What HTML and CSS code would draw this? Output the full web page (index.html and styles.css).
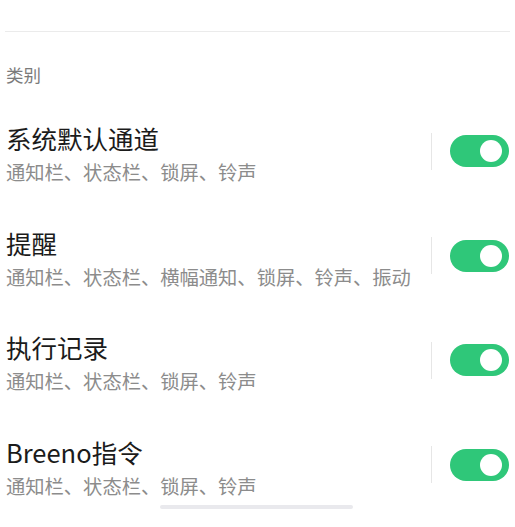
FILE: index.html
```html
<!DOCTYPE html>
<html lang="zh-CN">
<head>
  <meta charset="UTF-8">
  <meta name="viewport" content="width=device-width, initial-scale=1.0">
  <title>通知类别</title>
  <link rel="stylesheet" href="styles.css">
</head>
<body>
  <div class="top-bar"></div>

  <div class="section-label">类别</div>

  <ul class="channel-list">
    <li class="channel">
      <div class="channel-text">
        <div class="channel-title">系统默认通道</div>
        <div class="channel-desc">通知栏、状态栏、锁屏、铃声</div>
      </div>
      <span class="split"></span>
      <span class="switch on"><span class="knob"></span></span>
    </li>
    <li class="channel">
      <div class="channel-text">
        <div class="channel-title">提醒</div>
        <div class="channel-desc">通知栏、状态栏、横幅通知、锁屏、铃声、振动</div>
      </div>
      <span class="split"></span>
      <span class="switch on"><span class="knob"></span></span>
    </li>
    <li class="channel">
      <div class="channel-text">
        <div class="channel-title">执行记录</div>
        <div class="channel-desc">通知栏、状态栏、锁屏、铃声</div>
      </div>
      <span class="split"></span>
      <span class="switch on"><span class="knob"></span></span>
    </li>
    <li class="channel">
      <div class="channel-text">
        <div class="channel-title">Breeno指令</div>
        <div class="channel-desc">通知栏、状态栏、锁屏、铃声</div>
      </div>
      <span class="split"></span>
      <span class="switch on"><span class="knob"></span></span>
    </li>
  </ul>

  <!-- scroll indicator at the bottom -->
  <div class="scroll-bar"></div>
</body>
</html>
```

FILE: styles.css
```css
body {
  margin: 0;
  width: 515px;
  height: 527px;
  overflow: hidden;
  position: relative;
  background-color: #fff;
  font-family: "Noto Sans CJK SC", "Noto Sans", sans-serif;
}

.top-bar {
  height: 31px;
  margin: 0 5px;
  border-bottom: 1px solid #ebebeb;
}

.section-label {
  padding: 31px 0 0 6px;
  margin-bottom: 15px;
  font-size: 17.5px;
  line-height: 24px;
  color: #7b7b7b;
}

.channel-list {
  list-style: none;
  margin: 0;
  padding: 0;
}

.channel {
  display: flex;
  align-items: center;
  padding: 21px 6px 21.5px 6px;
}

.channel-text {
  flex: 1;
}

.channel-title {
  font-size: 25.5px;
  line-height: 30px;
  color: #1b1b1b;
}

.channel-desc {
  margin-top: 6px;
  font-size: 19.3px;
  line-height: 26px;
  color: #8c8c8c;
}

.split {
  width: 1px;
  height: 37px;
  margin: 0 18px 6px 0;
  background-color: #e6e6e6;
}

.switch {
  position: relative;
  width: 59px;
  height: 32px;
  margin-bottom: 6px;
  border-radius: 16px;
  background-color: #d8d8d8;
}

.switch.on {
  background-color: #2fc779;
}

.switch .knob {
  position: absolute;
  top: 5px;
  right: 7px;
  width: 22px;
  height: 22px;
  border-radius: 50%;
  background-color: #fff;
}

.scroll-bar {
  position: absolute;
  left: 160px;
  bottom: 18px;
  width: 193px;
  height: 4px;
  border-radius: 2px;
  background-color: #e9e9ed;
}
```
